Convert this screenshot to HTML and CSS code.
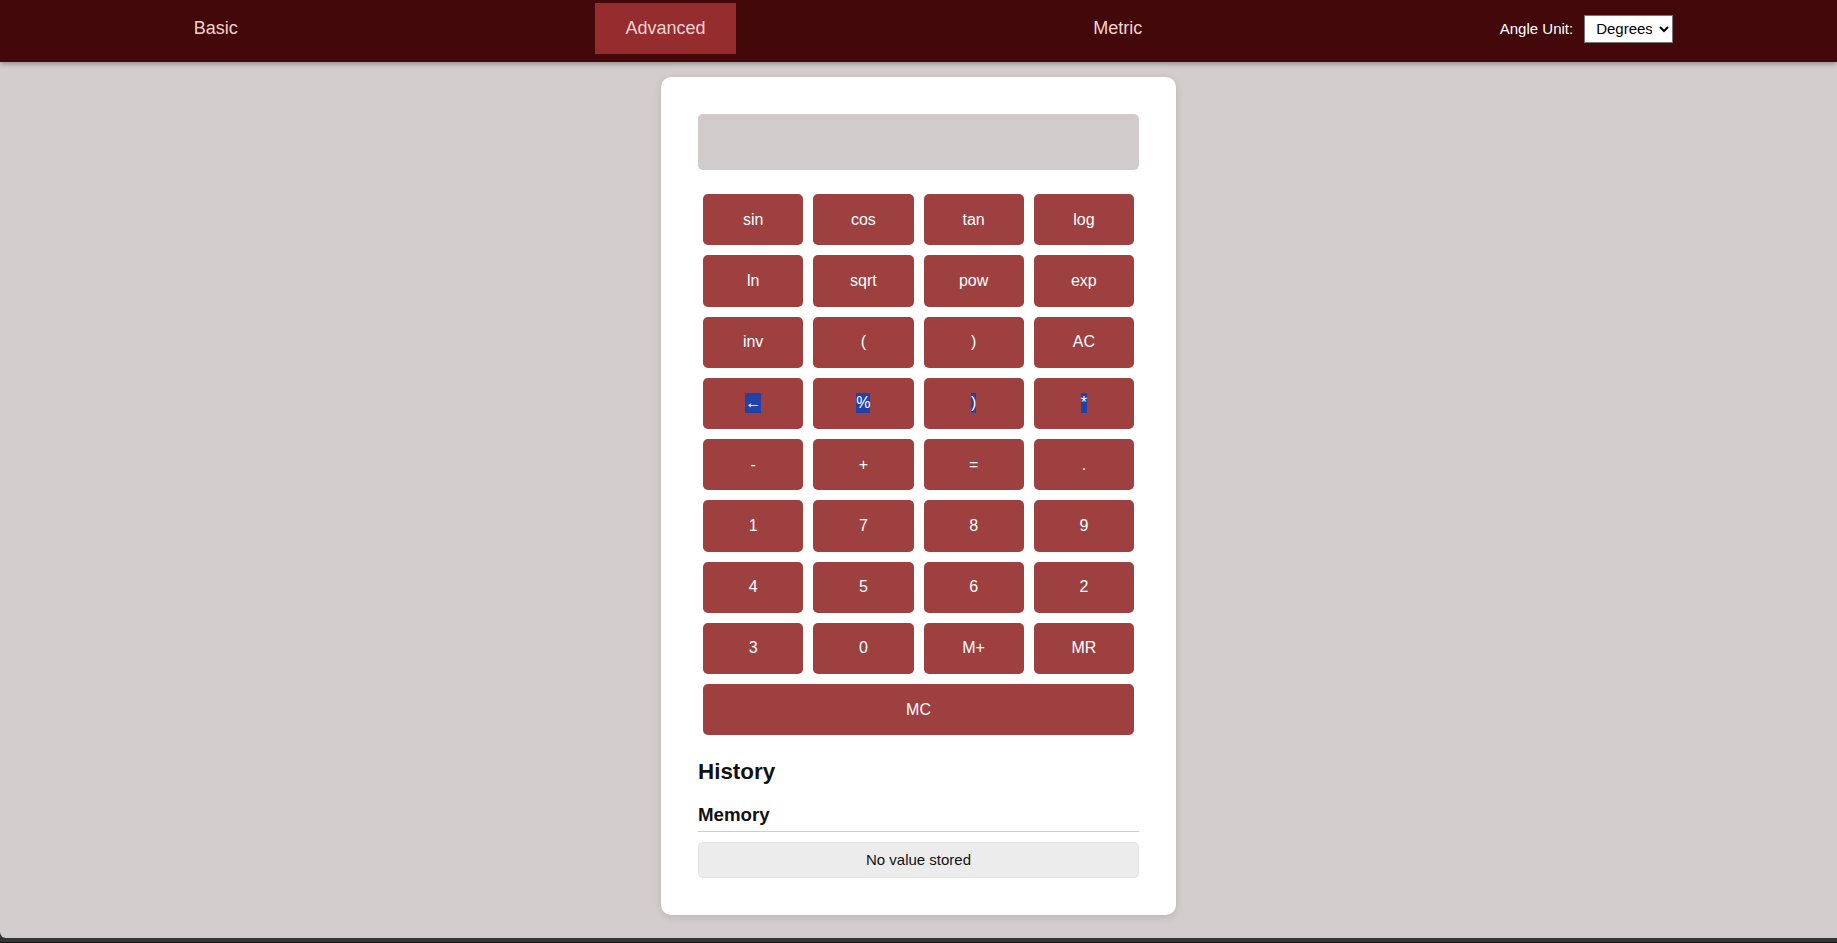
FILE: index.html
```html
<!DOCTYPE html>
<html lang="en">
<head>
<meta charset="utf-8">
<title>Calculator</title>
<link rel="stylesheet" href="styles.css">
</head>
<body>
<div class="page">
  <nav class="topnav">
    <a class="nav-link" href="#">Basic</a>
    <a class="nav-link active" href="#">Advanced</a>
    <a class="nav-link" href="#">Metric</a>
    <div class="angle">
      <label class="angle-label" for="unit">Angle Unit:</label>
      <select id="unit" class="angle-select">
        <option>Degrees</option>
        <option>Radians</option>
      </select>
    </div>
  </nav>
  <main class="card">
    <div class="display"></div>
    <div class="keys">
      <button class="key">sin</button>
      <button class="key">cos</button>
      <button class="key">tan</button>
      <button class="key">log</button>
      <button class="key">ln</button>
      <button class="key">sqrt</button>
      <button class="key">pow</button>
      <button class="key">exp</button>
      <button class="key">inv</button>
      <button class="key">(</button>
      <button class="key">)</button>
      <button class="key">AC</button>
      <button class="key"><span class="sel">←</span></button>
      <button class="key"><span class="sel">%</span></button>
      <button class="key"><span class="sel">)</span></button>
      <button class="key"><span class="sel">*</span></button>
      <button class="key">-</button>
      <button class="key">+</button>
      <button class="key">=</button>
      <button class="key">.</button>
      <button class="key">1</button>
      <button class="key">7</button>
      <button class="key">8</button>
      <button class="key">9</button>
      <button class="key">4</button>
      <button class="key">5</button>
      <button class="key">6</button>
      <button class="key">2</button>
      <button class="key">3</button>
      <button class="key">0</button>
      <button class="key">M+</button>
      <button class="key">MR</button>
      <button class="key key-wide">MC</button>
    </div>
    <section class="history">
      <h2 class="history-title">History</h2>
    </section>
    <section class="memory">
      <h3 class="memory-title">Memory</h3>
      <div class="memory-value">No value stored</div>
    </section>
  </main>
</div>
<div class="edge"></div>
</body>
</html>
```

FILE: styles.css
```css
html, body {
  margin: 0;
  padding: 0;
}

body {
  background: #353535;
  font-family: "Liberation Sans", Arial, sans-serif;
  height: 943px;
  overflow: hidden;
}

.page {
  background: #d3cdcd;
  height: 938px;
  border-bottom-left-radius: 6px;
  overflow: hidden;
}

.edge {
  height: 4px;
  border-bottom: 1px solid #151515;
  background: #353535;
}

.topnav {
  background: #430809;
  display: flex;
  justify-content: space-around;
  align-items: center;
  padding: 3px 0 8px;
  box-shadow: 0 2px 5px rgba(0, 0, 0, 0.3);
}

.nav-link {
  color: #f3d2d2;
  text-decoration: none;
  font-size: 18px;
  padding: 15px 30px;
  line-height: 21px;
}

.nav-link.active {
  background: #952c2e;
}

.angle {
  display: flex;
  align-items: center;
}

.angle-label {
  color: #fff;
  font-size: 15px;
  margin-right: 11px;
}

.angle-select {
  font-family: "Liberation Sans", Arial, sans-serif;
  font-size: 15px;
  width: 89px;
  height: 28px;
  padding: 0 4px 0 7px;
  border: 1px solid #767676;
  border-radius: 0;
  background: #fff;
  color: #000;
}

.card {
  width: 441px;
  margin: 15px auto 0;
  padding: 37px;
  background: #fff;
  border-radius: 10px;
  box-shadow: 0 2px 8px rgba(0, 0, 0, 0.12);
}

.display {
  height: 56px;
  background: #d1cbcb;
  border-radius: 5px;
  margin-bottom: 19px;
}

.keys {
  display: grid;
  grid-template-columns: repeat(4, 1fr);
}

.key {
  margin: 5px;
  height: 51.25px;
  background: #9e3f40;
  color: #fff;
  border: none;
  border-radius: 5px;
  font-family: "Liberation Sans", Arial, sans-serif;
  font-size: 16px;
  padding: 0;
}

.key-wide {
  grid-column: 1 / span 4;
}

.sel {
  background: #2143a9;
  color: #fff;
  display: inline-block;
  line-height: 20px;
}

.history-title {
  font-size: 22.4px;
  color: #111;
  margin: 18.6px 0;
}

.memory-title {
  font-size: 18.72px;
  color: #111;
  margin: 18.72px 0 10px;
  padding-bottom: 5px;
  border-bottom: 1px solid #cccccc;
}

.memory-value {
  background: #ececec;
  border: 1px solid #e3e3e3;
  border-radius: 5px;
  padding: 8px;
  text-align: center;
  font-size: 15px;
  line-height: 18px;
  color: #111;
}
```
